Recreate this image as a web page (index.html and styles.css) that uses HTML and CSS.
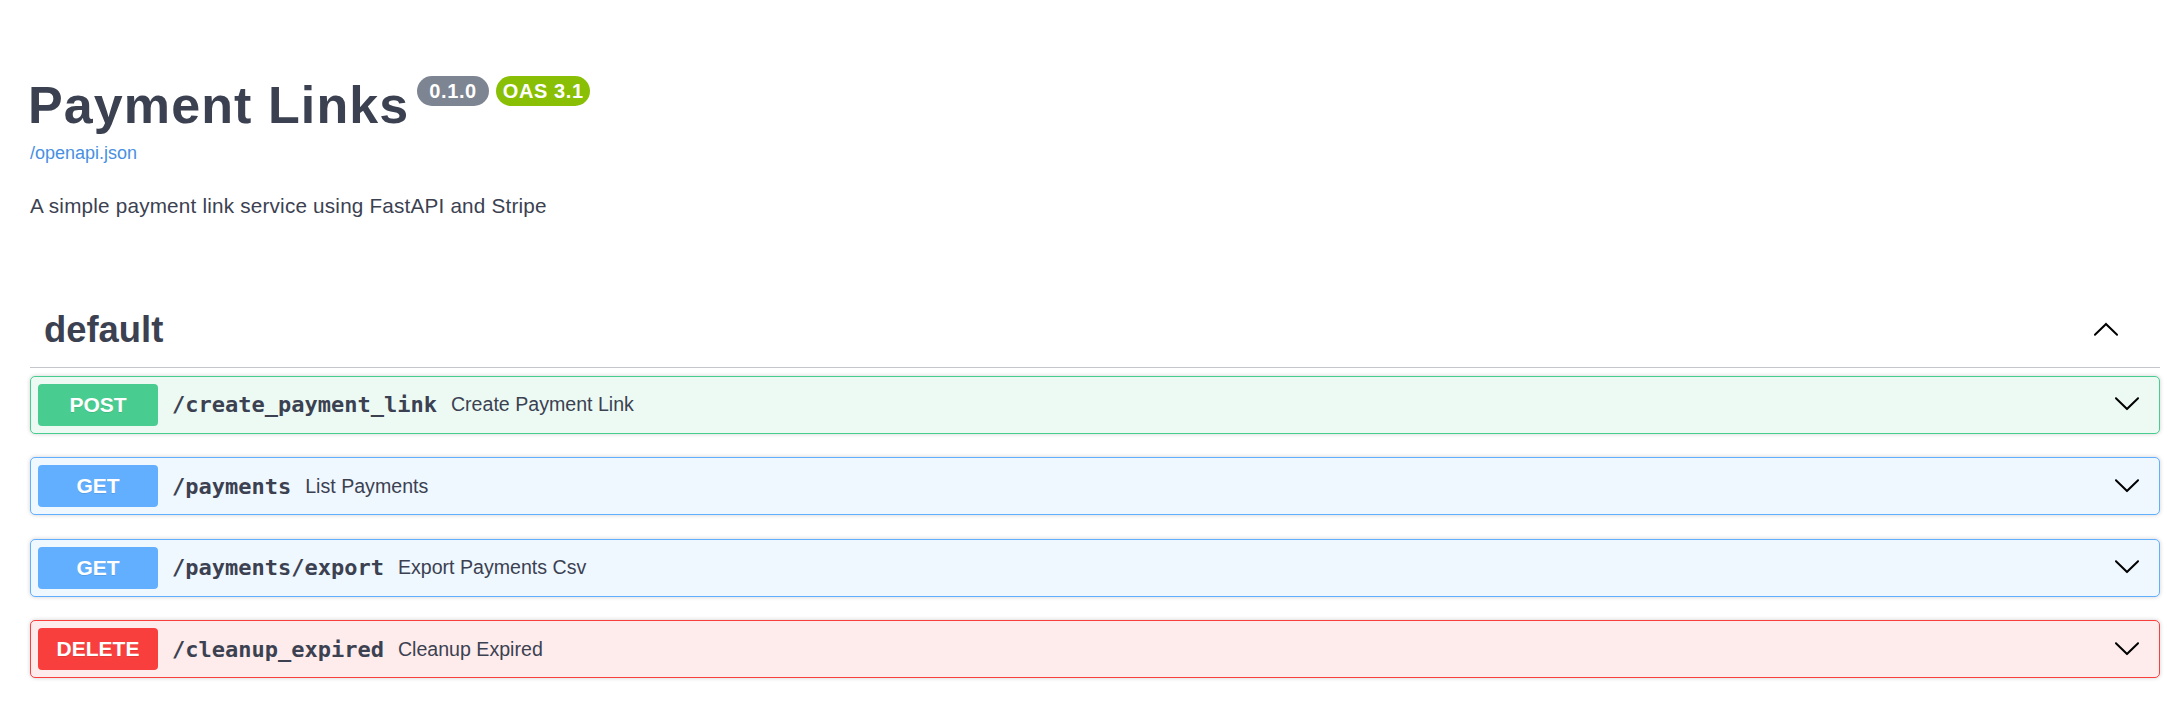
FILE: index.html
```html
<!DOCTYPE html>
<html lang="en">
<head>
<meta charset="utf-8">
<title>Payment Links - Swagger UI</title>
<link rel="stylesheet" href="styles.css">
</head>
<body>
<div class="wrapper">
  <section class="info">
    <div class="title-row">
      <h1 class="title">Payment Links</h1>
      <span class="stamp stamp-version">0.1.0</span>
      <span class="stamp stamp-oas">OAS 3.1</span>
    </div>
    <a class="spec-link" href="#">/openapi.json</a>
    <p class="desc">A simple payment link service using FastAPI and Stripe</p>
  </section>

  <section class="tag-section">
    <div class="tag-head">
      <h3 class="tag-name">default</h3>
      <svg class="arrow arrow-up" width="28" height="28" viewBox="0 0 20 20"><path transform="rotate(180 10 10)" d="M17.418 6.109c.272-.268.709-.268.979 0s.271.701 0 .969l-7.908 7.83c-.27.268-.707.268-.979 0l-7.908-7.830c-.27-.268-.27-.701 0-.969.271-.268.709-.268.979 0L10 13.25l7.418-7.141z"/></svg>
    </div>

    <div class="opblock op-post">
      <span class="method">POST</span>
      <span class="path">/create_payment_link</span>
      <span class="summary">Create Payment Link</span>
      <svg class="arrow arrow-down" width="28" height="28" viewBox="0 0 20 20"><path d="M17.418 6.109c.272-.268.709-.268.979 0s.271.701 0 .969l-7.908 7.83c-.27.268-.707.268-.979 0l-7.908-7.83c-.27-.268-.27-.701 0-.969.271-.268.709-.268.979 0L10 13.25l7.418-7.141z"/></svg>
    </div>

    <div class="opblock op-get">
      <span class="method">GET</span>
      <span class="path">/payments</span>
      <span class="summary">List Payments</span>
      <svg class="arrow arrow-down" width="28" height="28" viewBox="0 0 20 20"><path d="M17.418 6.109c.272-.268.709-.268.979 0s.271.701 0 .969l-7.908 7.83c-.27.268-.707.268-.979 0l-7.908-7.83c-.27-.268-.27-.701 0-.969.271-.268.709-.268.979 0L10 13.25l7.418-7.141z"/></svg>
    </div>

    <div class="opblock op-get">
      <span class="method">GET</span>
      <span class="path">/payments/export</span>
      <span class="summary">Export Payments Csv</span>
      <svg class="arrow arrow-down" width="28" height="28" viewBox="0 0 20 20"><path d="M17.418 6.109c.272-.268.709-.268.979 0s.271.701 0 .969l-7.908 7.83c-.27.268-.707.268-.979 0l-7.908-7.83c-.27-.268-.27-.701 0-.969.271-.268.709-.268.979 0L10 13.25l7.418-7.141z"/></svg>
    </div>

    <div class="opblock op-delete">
      <span class="method">DELETE</span>
      <span class="path">/cleanup_expired</span>
      <span class="summary">Cleanup Expired</span>
      <svg class="arrow arrow-down" width="28" height="28" viewBox="0 0 20 20"><path d="M17.418 6.109c.272-.268.709-.268.979 0s.271.701 0 .969l-7.908 7.83c-.27.268-.707.268-.979 0l-7.908-7.83c-.27-.268-.27-.701 0-.969.271-.268.709-.268.979 0L10 13.25l7.418-7.141z"/></svg>
    </div>
  </section>
</div>
</body>
</html>
```

FILE: styles.css
```css
html, body {
  margin: 0;
  padding: 0;
  background: #ffffff;
}

body {
  font-family: "Liberation Sans", Arial, sans-serif;
  color: #3b4151;
}

.wrapper {
  padding: 0 23px 0 30px;
}

.info {
  padding-top: 75px;
}

.title-row {
  display: flex;
  align-items: flex-start;
}

.title {
  margin: 0 0 0 -2px;
  font-size: 52px;
  line-height: 60px;
  font-weight: 700;
  letter-spacing: 1.1px;
  color: #3b4151;
}

.stamp {
  display: inline-block;
  height: 30px;
  line-height: 30px;
  margin-top: 1px;
  border-radius: 57px;
  color: #ffffff;
  font-size: 20px;
  font-weight: 700;
  letter-spacing: 0.6px;
}

.stamp-version {
  margin-left: 8px;
  padding: 0 12px;
  background: #7d8492;
}

.stamp-oas {
  margin-left: 7px;
  padding: 0 6px 0 7px;
  background: #89bf04;
}

.spec-link {
  display: block;
  margin-top: 7px;
  font-size: 18px;
  line-height: 22px;
  color: #4990e2;
  text-decoration: none;
}

.desc {
  margin: 29px 0 0;
  font-size: 20.7px;
  line-height: 26px;
  letter-spacing: 0.2px;
  color: #3b4151;
}

.tag-section {
  margin-top: 91px;
}

.tag-head {
  display: flex;
  align-items: center;
  justify-content: space-between;
  padding: 0 40px 17px 14px;
  border-bottom: 1px solid #c4c6cb;
}

.tag-name {
  margin: 0;
  font-size: 36.4px;
  line-height: 40px;
  font-weight: 700;
  color: #3b4151;
}

.arrow {
  display: block;
  flex: none;
  fill: #000000;
}

.opblock {
  display: flex;
  align-items: center;
  height: 42px;
  padding: 7px 18px 7px 7px;
  border: 1px solid;
  border-radius: 5px;
  box-shadow: 0 0 4px rgba(0, 0, 0, 0.19);
  margin-bottom: 23.5px;
}

.tag-head + .opblock {
  margin-top: 7.5px;
}

.method {
  flex: none;
  width: 120px;
  height: 42px;
  line-height: 42px;
  border-radius: 4px;
  text-align: center;
  color: #ffffff;
  font-size: 21px;
  font-weight: 700;
  text-shadow: 0 1px 0 rgba(0, 0, 0, 0.1);
}

.path {
  padding: 0 14px;
  font-family: "DejaVu Sans Mono", "Liberation Mono", monospace;
  font-size: 22px;
  font-weight: 700;
  color: #3b4151;
}

.summary {
  flex: 1;
  font-size: 19.6px;
  color: #3b4151;
}

.arrow-down {
  margin-bottom: 3px;
}

.op-post {
  background: #edfaf4;
  border-color: #49cc90;
}
.op-post .method {
  background: #49cc90;
}

.op-get {
  background: #eff7ff;
  border-color: #61affe;
}
.op-get .method {
  background: #61affe;
}

.op-delete {
  background: #feecec;
  border-color: #f93e3e;
}
.op-delete .method {
  background: #f93e3e;
}
```
